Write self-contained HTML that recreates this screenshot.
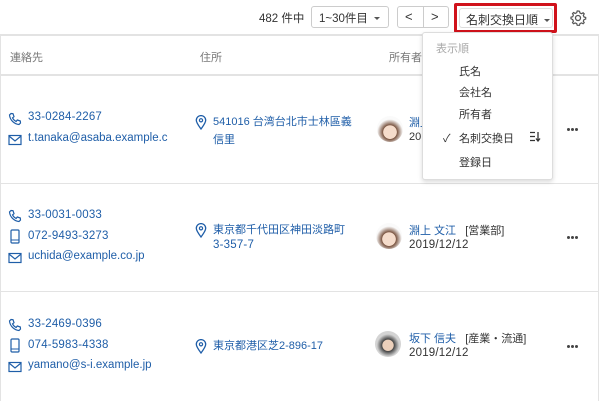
<!DOCTYPE html>
<html><head><meta charset="utf-8"><style>
*{margin:0;padding:0;box-sizing:border-box}
body{width:600px;height:401px;overflow:hidden;background:#fff;font-family:"Liberation Sans","Noto Sans CJK JP",sans-serif;font-size:11px;color:#333;position:relative}
.a{position:absolute;white-space:nowrap}
.b{color:#1f5ea8}
.n{font-size:11.5px;letter-spacing:.2px}
.hl{position:absolute;left:0;width:598px;height:1px;background:#e3e3e3}
.btn{position:absolute;border:1px solid #ccc;border-radius:3px;background:#fff;height:22px;top:6px}
.caret{display:inline-block;border-left:3px solid transparent;border-right:3px solid transparent;border-top:3px solid #555;vertical-align:middle;margin-left:6px}
svg{position:absolute}
.av{position:absolute;width:26px;height:26px;border-radius:50%;overflow:hidden}
.dots{position:absolute;width:12px;height:3px}
.dots i{position:absolute;top:0;width:3px;height:3px;border-radius:50%;background:#444}
</style></head><body>
<div style="position:absolute;left:0;top:34px;width:1px;height:367px;background:#e3e3e3"></div>
<div style="position:absolute;left:598px;top:34px;width:1px;height:367px;background:#e3e3e3"></div>
<div class="hl" style="top:34px;height:2px"></div>
<div class="hl" style="top:74px;height:2px"></div>
<div class="hl" style="top:183px"></div>
<div class="hl" style="top:291px"></div>

<div class="a" style="left:259px;top:10px;font-size:11.5px">482 件中</div>
<div class="btn" style="left:311px;width:78px"><span class="a" style="left:7px;top:3px;font-size:11.5px">1~30件目<span class="caret"></span></span></div>
<div class="btn" style="left:397px;width:52px"><div style="position:absolute;left:25px;top:0;width:1px;height:20px;background:#ccc"></div>
<span class="a" style="left:7px;top:2px;font-size:13px">&lt;</span><span class="a" style="left:33px;top:2px;font-size:13px">&gt;</span></div>
<div style="position:absolute;left:454px;top:3px;width:103px;height:30px;border:3px solid #d0121b;border-radius:2px"></div>
<div class="btn" style="left:459px;top:8px;width:94px;height:20px;border-color:#ddd"><span class="a" style="left:6px;top:2px;font-size:12px">名刺交換日順<span class="caret"></span></span></div>
<svg style="left:569px;top:9px" width="18" height="18" viewBox="0 0 18 18"><circle cx="9" cy="9" r="2.5" fill="none" stroke="#555" stroke-width="1.3"/><path d="M9 2l1.5.3.5 1.7 1.6.7 1.5-.9 1.1 1.1-.9 1.5.7 1.6 1.7.5v1.6l-1.7.5-.7 1.6.9 1.5-1.1 1.1-1.5-.9-1.6.7-.5 1.7H8.2l-.5-1.7-1.6-.7-1.5.9-1.1-1.1.9-1.5-.7-1.6L2 9.8V8.2l1.7-.5.7-1.6-.9-1.5 1.1-1.1 1.5.9 1.6-.7.5-1.7z" fill="none" stroke="#555" stroke-width="1.2"/></svg>

<div class="a" style="left:10px;top:49px;color:#777">連絡先</div>
<div class="a" style="left:200px;top:49px;color:#777">住所</div>
<div class="a" style="left:389px;top:49px;color:#777">所有者</div>

<!-- row1 -->
<svg style="left:8px;top:112px" width="14" height="14" viewBox="0 0 14 14"><path d="M3 1.5l2 .2 1 3-1.5 1.2c.8 1.6 2 2.8 3.6 3.6L9.3 8l3 1 .2 2-1.5 1.5C6 12 2 8 1.5 3z" fill="none" stroke="#1f5ea8" stroke-width="1.2"/></svg>
<div class="a b n" style="left:28px;top:111px">33-0284-2267</div>
<svg style="left:8px;top:134px" width="14" height="12" viewBox="0 0 14 12"><rect x="1" y="1.5" width="12" height="9" fill="none" stroke="#1f5ea8" stroke-width="1.2"/><path d="M1 2l6 5 6-5" fill="none" stroke="#1f5ea8" stroke-width="1.2"/></svg>
<div class="a b n" style="left:28px;top:132px;letter-spacing:0">t.tanaka@asaba.example.c</div>
<svg style="left:195px;top:115px" width="12" height="15" viewBox="0 0 12 15"><path d="M6 14C3 10 1.3 7.5 1.3 5.3a4.7 4.7 0 019.4 0C10.7 7.5 9 10 6 14z" fill="none" stroke="#1f5ea8" stroke-width="1.3"/><circle cx="6" cy="5.3" r="1.6" fill="none" stroke="#1f5ea8" stroke-width="1.2"/></svg>
<div class="a b" style="left:213px;top:113px">541016 台湾台北市士林區義</div>
<div class="a b" style="left:213px;top:131px">信里</div>
<div class="av" style="left:377px;top:116px;background:radial-gradient(circle at 50% 62%,#f5dccb 32%,#7a5440 34%,#fafafa 62%)"></div>
<div class="a b" style="left:409px;top:114px">淵上</div>
<div class="a" style="left:409px;top:131px">20</div>
<div class="dots" style="left:567px;top:128px"><i style="left:0"></i><i style="left:4px"></i><i style="left:8px"></i></div>

<!-- row2 -->
<svg style="left:8px;top:209px" width="14" height="14" viewBox="0 0 14 14"><path d="M3 1.5l2 .2 1 3-1.5 1.2c.8 1.6 2 2.8 3.6 3.6L9.3 8l3 1 .2 2-1.5 1.5C6 12 2 8 1.5 3z" fill="none" stroke="#1f5ea8" stroke-width="1.2"/></svg>
<div class="a b n" style="left:28px;top:209px">33-0031-0033</div>
<svg style="left:9px;top:229px" width="12" height="15" viewBox="0 0 12 15"><rect x="2" y="1" width="8" height="13" rx="1" fill="none" stroke="#1f5ea8" stroke-width="1.2"/><path d="M2 11h8" stroke="#1f5ea8"/></svg>
<div class="a b n" style="left:28px;top:230px">072-9493-3273</div>
<svg style="left:8px;top:252px" width="14" height="12" viewBox="0 0 14 12"><rect x="1" y="1.5" width="12" height="9" fill="none" stroke="#1f5ea8" stroke-width="1.2"/><path d="M1 2l6 5 6-5" fill="none" stroke="#1f5ea8" stroke-width="1.2"/></svg>
<div class="a b n" style="left:28px;top:250px;letter-spacing:0">uchida@example.co.jp</div>
<svg style="left:195px;top:223px" width="12" height="15" viewBox="0 0 12 15"><path d="M6 14C3 10 1.3 7.5 1.3 5.3a4.7 4.7 0 019.4 0C10.7 7.5 9 10 6 14z" fill="none" stroke="#1f5ea8" stroke-width="1.3"/><circle cx="6" cy="5.3" r="1.6" fill="none" stroke="#1f5ea8" stroke-width="1.2"/></svg>
<div class="a b" style="left:213px;top:221px">東京都千代田区神田淡路町</div>
<div class="a b n" style="left:213px;top:239px">3-357-7</div>
<div class="av" style="left:376px;top:223px;background:radial-gradient(circle at 50% 62%,#f5dccb 32%,#7a5440 34%,#fafafa 62%)"></div>
<div class="a" style="left:409px;top:222px"><span class="b">淵上 文江</span>&nbsp;&nbsp; [営業部]</div>
<div class="a n" style="left:409px;top:239px">2019/12/12</div>
<div class="dots" style="left:567px;top:236px"><i style="left:0"></i><i style="left:4px"></i><i style="left:8px"></i></div>

<!-- row3 -->
<svg style="left:8px;top:318px" width="14" height="14" viewBox="0 0 14 14"><path d="M3 1.5l2 .2 1 3-1.5 1.2c.8 1.6 2 2.8 3.6 3.6L9.3 8l3 1 .2 2-1.5 1.5C6 12 2 8 1.5 3z" fill="none" stroke="#1f5ea8" stroke-width="1.2"/></svg>
<div class="a b n" style="left:28px;top:318px">33-2469-0396</div>
<svg style="left:9px;top:338px" width="12" height="15" viewBox="0 0 12 15"><rect x="2" y="1" width="8" height="13" rx="1" fill="none" stroke="#1f5ea8" stroke-width="1.2"/><path d="M2 11h8" stroke="#1f5ea8"/></svg>
<div class="a b n" style="left:28px;top:339px">074-5983-4338</div>
<svg style="left:8px;top:361px" width="14" height="12" viewBox="0 0 14 12"><rect x="1" y="1.5" width="12" height="9" fill="none" stroke="#1f5ea8" stroke-width="1.2"/><path d="M1 2l6 5 6-5" fill="none" stroke="#1f5ea8" stroke-width="1.2"/></svg>
<div class="a b n" style="left:28px;top:359px;letter-spacing:0">yamano@s-i.example.jp</div>
<svg style="left:195px;top:339px" width="12" height="15" viewBox="0 0 12 15"><path d="M6 14C3 10 1.3 7.5 1.3 5.3a4.7 4.7 0 019.4 0C10.7 7.5 9 10 6 14z" fill="none" stroke="#1f5ea8" stroke-width="1.3"/><circle cx="6" cy="5.3" r="1.6" fill="none" stroke="#1f5ea8" stroke-width="1.2"/></svg>
<div class="a b" style="left:213px;top:337px">東京都港区芝2-896-17</div>
<div class="av" style="left:375px;top:331px;background:radial-gradient(circle at 50% 55%,#ecd0bb 28%,#444 31%,#d4d4d4 58%)"></div>
<div class="a" style="left:409px;top:330px"><span class="b">坂下 信夫</span>&nbsp;&nbsp; [産業・流通]</div>
<div class="a n" style="left:409px;top:347px">2019/12/12</div>
<div class="dots" style="left:567px;top:345px"><i style="left:0"></i><i style="left:4px"></i><i style="left:8px"></i></div>

<!-- dropdown -->
<div style="position:absolute;left:422px;top:32px;width:131px;height:148px;background:#fff;border:1px solid #ddd;border-radius:3px;box-shadow:0 2px 5px rgba(0,0,0,.15)"></div>
<div class="a" style="left:436px;top:40px;color:#aaa">表示順</div>
<div class="a" style="left:459px;top:63px">氏名</div>
<div class="a" style="left:459px;top:84px">会社名</div>
<div class="a" style="left:459px;top:106px">所有者</div>
<div class="a" style="left:443px;top:130px">✓</div>
<div class="a" style="left:459px;top:130px">名刺交換日</div>
<svg style="left:529px;top:131px" width="12" height="11" viewBox="0 0 12 11"><path d="M1 1.5h5M1 5.5h5M1 9.5h5M9 1v9M7 7.5l2 2.5 2-2.5" fill="none" stroke="#333" stroke-width="1.3"/></svg>
<div class="a" style="left:459px;top:154px">登録日</div>
</body></html>
